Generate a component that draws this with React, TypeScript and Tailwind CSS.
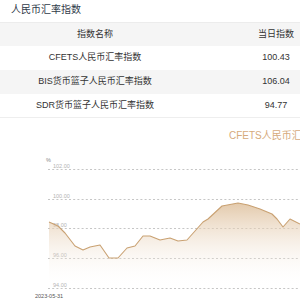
import React from 'react';

const rows = [
  { name: 'CFETS人民币汇率指数', value: '100.43' },
  { name: 'BIS货币篮子人民币汇率指数', value: '106.04' },
  { name: 'SDR货币篮子人民币汇率指数', value: '94.77' },
];

const linePts: [number, number][] = [
  [49, 223], [58, 227], [65, 234], [75, 247], [83, 251], [90, 248], [100, 246],
  [109, 259], [118, 259], [127, 249], [135, 247], [143, 237], [150, 237], [160, 241],
  [170, 239], [178, 242], [187, 241], [203, 223], [208, 220], [222, 207], [238, 204],
  [248, 206], [260, 210], [272, 215], [277, 220], [283, 228], [290, 220], [300, 225],
];

const grid = [
  { y: 170, label: '102.00' },
  { y: 200, label: '100.00' },
  { y: 229, label: '98.00' },
  { y: 259, label: '96.00' },
  { y: 289, label: '94.00' },
];

const RateChart = () => {
  const line = linePts.map((p) => p.join(',')).join(' ');
  const area = `${line} 300,289 49,289`;
  return (
    <svg width="300" height="155" viewBox="0 145 300 155" className="block">
      <defs>
        <linearGradient id="areaFill" x1="0" y1="204" x2="0" y2="289" gradientUnits="userSpaceOnUse">
          <stop offset="0" stopColor="#dcbc96" stopOpacity="0.8" />
          <stop offset="1" stopColor="#ffffff" stopOpacity="0" />
        </linearGradient>
      </defs>
      <text x="46" y="163" fontSize="5.5" fill="#888">%</text>
      {grid.map((g) => (
        <g key={g.label}>
          <line x1="48" x2="300" y1={g.y + 0.5} y2={g.y + 0.5} stroke="#c6c6c6" strokeWidth="1" strokeDasharray="2 2.2" />
          <text x="53" y={g.y - 1} fontSize="5.5" fill="#b3b3b3">{g.label}</text>
        </g>
      ))}
      <polygon points={area} fill="url(#areaFill)" />
      <polyline points={line} fill="none" stroke="#c9a172" strokeWidth="1.1" strokeLinejoin="round" />
      <text x="35" y="299" fontSize="5.5" fill="#555">2023-05-31</text>
    </svg>
  );
};

export default function App() {
  return (
    <div
      className="w-[300px] h-[300px] overflow-hidden bg-white text-[#333]"
      style={{ fontFamily: '"Liberation Sans", "Noto Sans CJK SC", sans-serif' }}
    >
      <div className="h-[22px] pl-[11px] pt-[4px] text-[10px] leading-[12px] text-[#2f3b4a]">人民币汇率指数</div>

      <div className="text-[9px]">
        <div className="flex h-[24px] items-center bg-[#f5f5f5] border-t border-[#ececec]">
          <div className="w-[190px] text-center">指数名称</div>
          <div className="ml-auto mr-[2px] w-[44px] text-center">当日指数</div>
        </div>
        {rows.map((r, i) => (
          <div
            key={r.name}
            className={`flex h-[24px] items-center ${i === 1 ? 'bg-[#f5f5f5]' : 'bg-white'} ${i === 2 ? 'border-b border-[#eeeeee]' : ''}`}
          >
            <div className="w-[190px] text-center">{r.name}</div>
            <div className="ml-auto mr-[2px] w-[44px] text-center">{r.value}</div>
          </div>
        ))}
      </div>

      <div className="h-[26px] overflow-hidden whitespace-nowrap pl-[229px] pt-[12px] text-[10px] leading-[12px] text-[#d6aa7c]">
        CFETS人民币汇率指数
      </div>
      <RateChart />
    </div>
  );
}
